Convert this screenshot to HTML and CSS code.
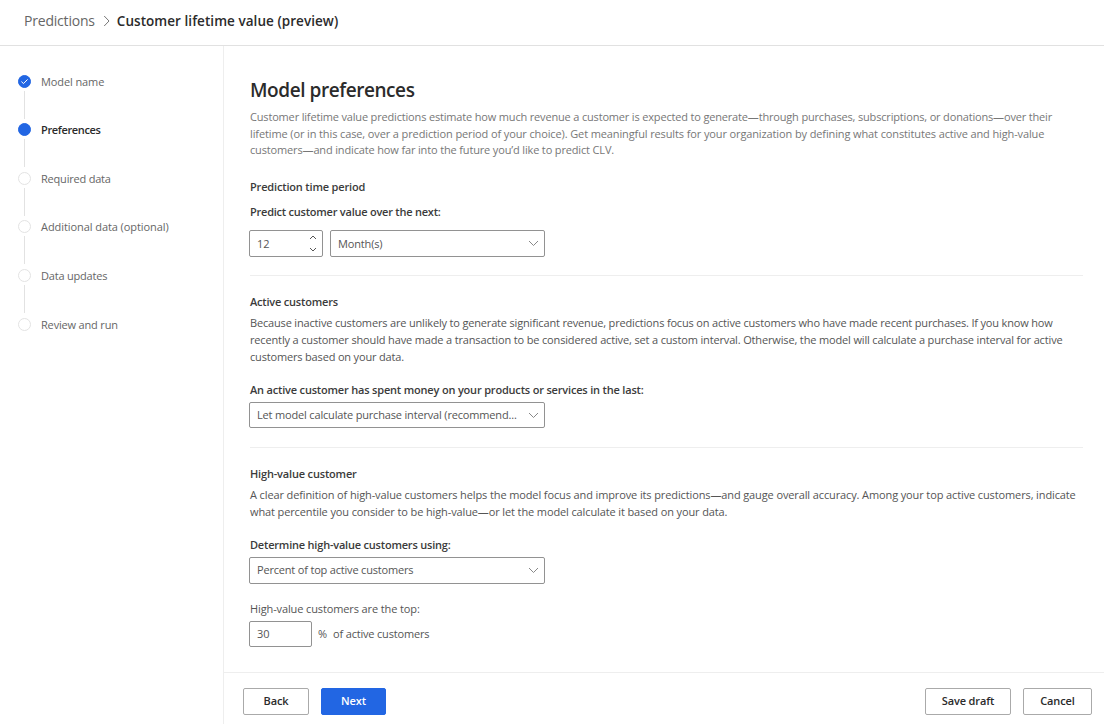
FILE: index.html
```html
<!DOCTYPE html>
<html lang="en">
<head>
<meta charset="utf-8">
<title>Customer lifetime value (preview)</title>
<link rel="stylesheet" href="styles.css">
</head>
<body>
<header class="header">
  <span class="crumb">Predictions</span>
  <svg class="crumb-sep" width="8" height="12" viewBox="0 0 8 12"><path d="M1.2 1 6 6 1.2 11"/></svg>
  <span class="crumb-current">Customer lifetime value (preview)</span>
</header>
<div class="body">
  <nav class="steps">
    <div class="step done"><span class="dot"><svg width="13" height="13" viewBox="0 0 13 13"><path d="M3.4 6.6 5.5 8.6 9.6 4.4"/></svg></span><span class="t10">Model name</span></div>
    <div class="step current"><span class="dot"></span><span class="t35">Preferences</span></div>
    <div class="step"><span class="dot"></span><span class="t20">Required data</span></div>
    <div class="step"><span class="dot"></span><span class="t07">Additional data (optional)</span></div>
    <div class="step"><span class="dot"></span><span class="t20">Data updates</span></div>
    <div class="step"><span class="dot"></span><span class="t17">Review and run</span></div>
  </nav>
  <main class="main">
    <div class="content">
      <h1 class="title">Model preferences</h1>
      <p class="text intro"><span class="t17">Customer lifetime value predictions estimate how much revenue a customer is expected to generate—through purchases, subscriptions, or donations—over their</span><br><span class="t12">lifetime (or in this case, over a prediction period of your choice). Get meaningful results for your organization by defining what constitutes active and high-value</span><br><span class="t15">customers—and indicate how far into the future you’d like to predict CLV.</span></p>
      <section class="section period">
        <h2 class="heading t17">Prediction time period</h2>
        <div class="label t23">Predict customer value over the next:</div>
        <div class="row">
          <div class="field number"><span>12</span>
            <span class="spin"><svg width="8" height="5" viewBox="0 0 8 5"><path d="M1 4 4 1 7 4"/></svg><svg width="8" height="5" viewBox="0 0 8 5"><path d="M1 1 4 4 7 1"/></svg></span>
          </div>
          <div class="field unit"><span class="t15">Month(s)</span><svg class="chev" width="11" height="7" viewBox="0 0 11 7"><path d="M1 1 5.5 5.5 10 1"/></svg></div>
        </div>
      </section>
      <section class="section active">
        <h2 class="heading t20">Active customers</h2>
        <p class="text"><span class="t17">Because inactive customers are unlikely to generate significant revenue, predictions focus on active customers who have made recent purchases. If you know how</span><br><span class="t15">recently a customer should have made a transaction to be considered active, set a custom interval. Otherwise, the model will calculate a purchase interval for active</span><br><span class="t17">customers based on your data.</span></p>
        <div class="label t18">An active customer has spent money on your products or services in the last:</div>
        <div class="field wide short"><span class="t17">Let model calculate purchase interval (recommend...</span><svg class="chev" width="11" height="7" viewBox="0 0 11 7"><path d="M1 1 5.5 5.5 10 1"/></svg></div>
      </section>
      <section class="section high">
        <h2 class="heading t17">High-value customer</h2>
        <p class="text"><span class="t12">A clear definition of high-value customers helps the model focus and improve its predictions—and gauge overall accuracy. Among your top active customers, indicate</span><br><span class="t12">what percentile you consider to be high-value—or let the model calculate it based on your data.</span></p>
        <div class="label t20">Determine high-value customers using:</div>
        <div class="field wide"><span class="t18">Percent of top active customers</span><svg class="chev" width="11" height="7" viewBox="0 0 11 7"><path d="M1 1 5.5 5.5 10 1"/></svg></div>
        <div class="sublabel t12">High-value customers are the top:</div>
        <div class="row percent"><div class="field small short"><span>30</span></div><span class="pct">%</span><span class="t18">of active customers</span></div>
      </section>
    </div>
    <footer class="footer">
      <button class="btn back">Back</button>
      <button class="btn primary">Next</button>
      <button class="btn save">Save draft</button>
      <button class="btn cancel">Cancel</button>
    </footer>
  </main>
</div>
</body>
</html>
```
FILE: styles.css
```css
* { box-sizing: border-box; }
body {
  margin: 0; width: 1104px; height: 724px; overflow: hidden;
  display: flex; flex-direction: column;
  font-family: "Open Sans", "Noto Sans", sans-serif;
  font-size: 11px; line-height: 16px; color: #555; background: #fff;
  white-space: nowrap;
}
h1, h2, p { margin: 0; }
svg { fill: none; stroke: #777; stroke-width: 1; flex: none; display: block; }

/* Tracking steps */
.t07 { letter-spacing: -0.07px; }
.t10 { letter-spacing: -0.1px; }
.t12 { letter-spacing: -0.118px; }
.t15 { letter-spacing: -0.15px; }
.t17 { letter-spacing: -0.17px; }
.t18 { letter-spacing: -0.185px; }
.t20 { letter-spacing: -0.2px; }
.t23 { letter-spacing: -0.23px; }
.t35 { letter-spacing: -0.35px; }

.header { height: 46px; flex: none; display: flex; align-items: center; padding: 0 0 4px 24px; border-bottom: 1px solid #e1e1e1; font-size: 14px; line-height: 20px; color: #666; }
.crumb { letter-spacing: -0.2px; }
.crumb-sep { margin: 0 6px 0 8px; }
.crumb-current { font-size: 13.5px; font-weight: 600; letter-spacing: 0.05px; color: #2b2b2b; }
.body { flex: 1; display: flex; min-height: 0; }
.steps { width: 224px; flex: none; border-right: 1px solid #eee; padding: 27.8px 0 0 18px; }
.step { height: 48.55px; display: flex; gap: 10px; color: #666; }
.dot { width: 13px; height: 13px; margin-top: 1px; border: 1px solid #e3e3e3; border-radius: 50%; position: relative; flex: none; }
.step:not(:last-child) .dot::after { content: ""; position: absolute; left: 5px; top: 15px; width: 1px; height: 28px; background: #e2e2e2; }
.done .dot, .current .dot { background: #2266e3; border-color: #2266e3; }
.dot svg { margin: -1px; stroke: #fff; }
.current { color: #2b2b2b; font-weight: 600; }
.main { flex: 1; display: flex; flex-direction: column; min-width: 0; }
.content { height: 626px; padding: 32px 21px 0 26px; }
.title { font-size: 19px; line-height: 24px; font-weight: 600; letter-spacing: -0.43px; color: #2b2b2b; }
.text { line-height: 16.7px; }
.intro { margin-top: 7px; color: #777; }
.heading, .label { font-size: 11px; line-height: 16px; font-weight: 600; color: #3b3b3b; }
.section { border-bottom: 1px solid #eee; }
.period { padding-top: 20px; height: 117px; }
.period .label { margin-top: 9px; }
.row { display: flex; align-items: center; }
.period .row { margin-top: 10px; gap: 7px; }
.field { height: 27px; border: 1px solid #929292; border-radius: 2px; display: flex; align-items: center; justify-content: space-between; margin-left: -1px; padding: 0 5px 0 7px; background: #fff; }
.short { height: 26px; }
.number { width: 74px; }
.number svg { stroke: #555; }
.unit { width: 215px; margin-left: 0; }
.wide { width: 296px; }
.small { width: 63px; }
.chev { stroke: #888; }
.spin { display: flex; flex-direction: column; gap: 7px; }
.active { padding-top: 18px; height: 172px; }
.active .text, .high .text { margin-top: 5px; }
.active .label { margin: 17px 0 4px; }
.high { padding-top: 18px; border: 0; }
.high .label { margin: 16px 0 4px; }
.sublabel { margin: 17px 0 4px; }
.pct { margin: 0 6px; }
.footer { flex: 1; border-top: 1px solid #eee; display: flex; padding: 15px 12px 0 19px; }
.btn { height: 27px; padding: 0 0 1px; border: 1px solid #aaa; border-radius: 2px; background: #fff; font: 600 11px/16px "Open Sans", "Noto Sans", sans-serif; letter-spacing: -0.13px; color: #2b2b2b; }
.back { width: 66px; }
.primary { width: 65px; margin-left: 12px; background: #2266e3; border-color: #2266e3; color: #fff; }
.save { width: 86px; margin-left: auto; }
.cancel { width: 69px; margin-left: 12px; }
```
